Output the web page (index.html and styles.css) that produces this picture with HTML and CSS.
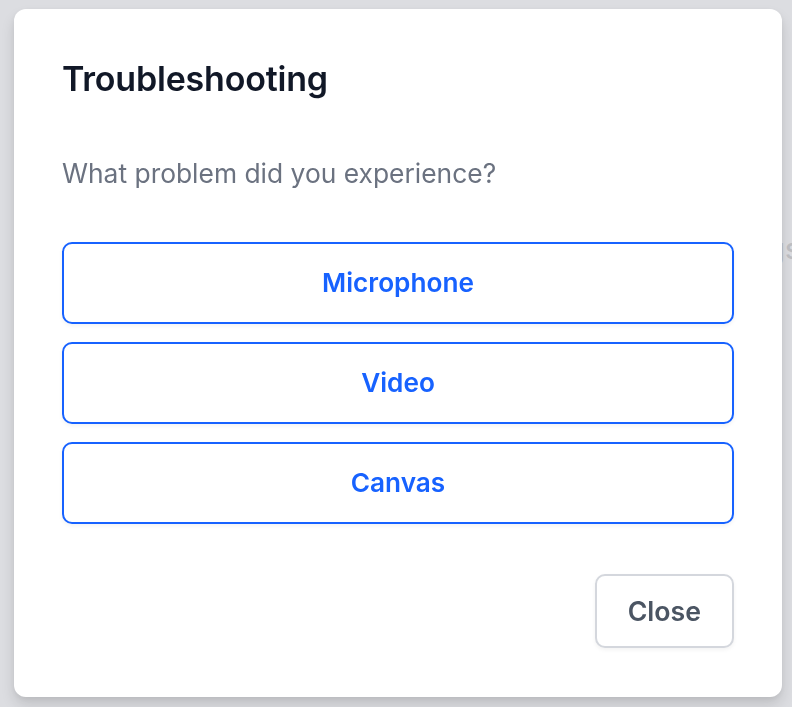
FILE: index.html
```html
<!DOCTYPE html>
<html lang="en">
<head>
<meta charset="utf-8">
<title>Troubleshooting</title>
<link rel="stylesheet" href="styles.css">
</head>
<body>
<div class="page">
  <p class="page-text">Settings</p>
</div>
<div class="overlay">
  <div class="modal" role="dialog" aria-labelledby="modal-title">
    <h2 class="modal-title" id="modal-title">Troubleshooting</h2>
    <p class="modal-question">What problem did you experience?</p>
    <div class="options">
      <button class="option" type="button">Microphone</button>
      <button class="option" type="button">Video</button>
      <button class="option" type="button">Canvas</button>
    </div>
    <div class="modal-footer">
      <button class="close-btn" type="button">Close</button>
    </div>
  </div>
</div>
</body>
</html>
```

FILE: styles.css
```css
* { box-sizing: border-box; }

html, body {
  margin: 0;
  padding: 0;
  height: 100%;
}

body {
  font-family: Inter, "Noto Sans", "Liberation Sans", sans-serif;
  background: #dcdde1;
  overflow: hidden;
}

.page {
  padding: 232px 0 0 0;
  display: flex;
  justify-content: flex-end;
}

.page-text {
  margin: 0 -8px 0 0;
  font-size: 28px;
  line-height: 34px;
  font-weight: 500;
  color: #bfc0c4;
}

.overlay {
  position: fixed;
  inset: 0;
  padding: 9px 10px 10px 14px;
  display: flex;
}

.modal {
  flex: 1;
  background: #ffffff;
  border-radius: 12px;
  padding: 48px;
  box-shadow: 0 8px 14px rgba(0, 0, 0, 0.12), 0 2px 6px rgba(0, 0, 0, 0.06);
  display: flex;
  flex-direction: column;
}

.modal-title {
  margin: 0;
  font-size: 34px;
  line-height: 44px;
  font-weight: 600;
  color: #111827;
  letter-spacing: -0.2px;
}

.modal-question {
  margin: 56px 0 0 0;
  font-size: 26.4px;
  line-height: 32px;
  color: #6b7280;
}

.options {
  margin-top: 53px;
  display: flex;
  flex-direction: column;
  gap: 18px;
}

.option {
  display: block;
  width: 100%;
  padding: 23px 16px;
  border: 2px solid #1762ff;
  border-radius: 10px;
  background: #ffffff;
  color: #1762ff;
  font-family: inherit;
  font-size: 26.2px;
  line-height: 32px;
  font-weight: 600;
  box-shadow: 0 2px 4px rgba(0, 0, 0, 0.05);
  text-align: center;
}

.modal-footer {
  margin-top: 50px;
  display: flex;
  justify-content: flex-end;
}

.close-btn {
  padding: 19px 31px;
  border: 2px solid #d4d7dd;
  border-radius: 10px;
  background: #ffffff;
  color: #4b5563;
  font-family: inherit;
  font-size: 26.7px;
  line-height: 32px;
  font-weight: 600;
  box-shadow: 0 2px 4px rgba(0, 0, 0, 0.05);
}
```
